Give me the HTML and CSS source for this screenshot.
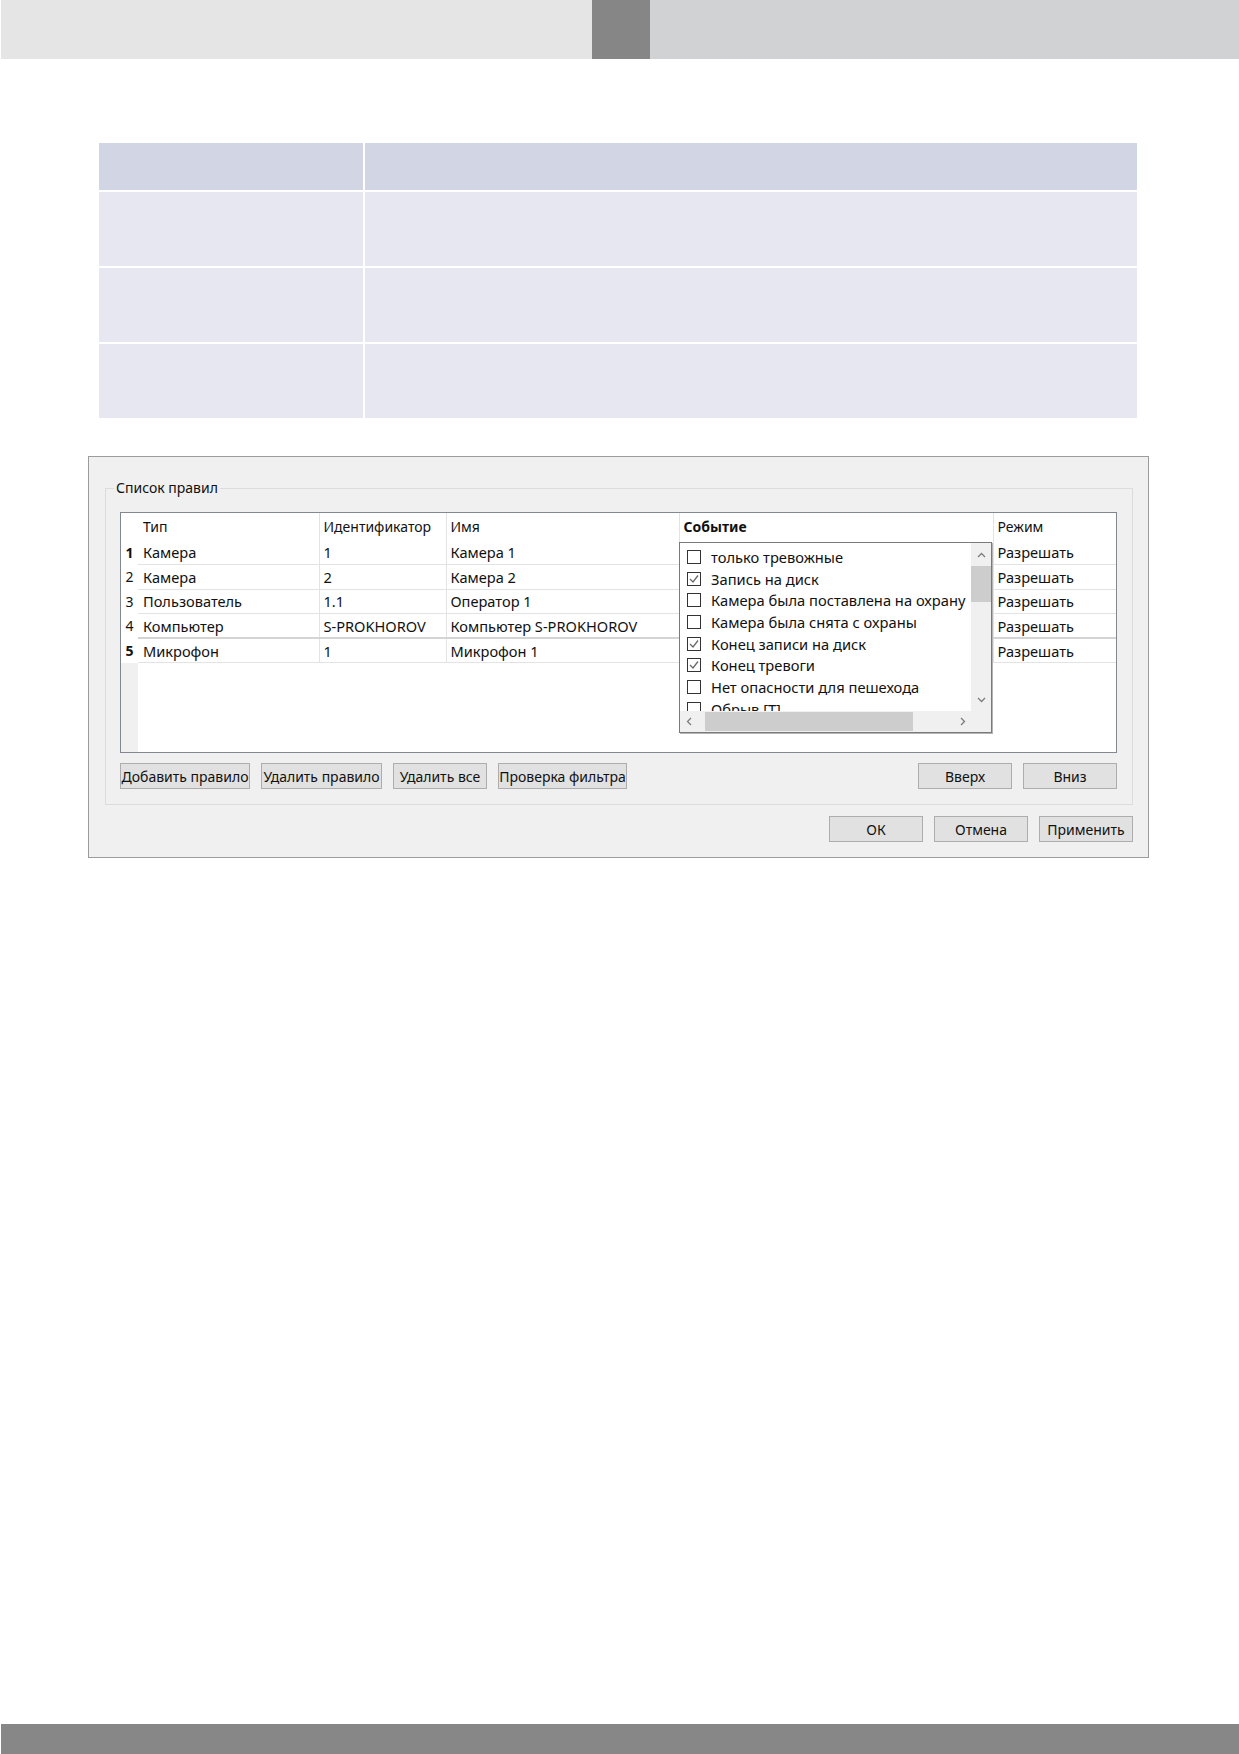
FILE: index.html
```html
<!DOCTYPE html>
<html>
<head>
    <title>Список правил</title>
    <link rel="stylesheet" href="styles.css">
</head>
<body>
    <header class="page-head">
        <div class="head-left"></div>
        <div class="head-mark"></div>
        <div class="head-right"></div>
    </header>

    <div class="doc-table">
        <div class="cell head"></div>
        <div class="cell head"></div>
        <div class="cell"></div>
        <div class="cell"></div>
        <div class="cell"></div>
        <div class="cell"></div>
        <div class="cell"></div>
        <div class="cell"></div>
    </div>

    <div class="dialog">
        <fieldset class="rules">
            <legend>Список правил</legend>
            <div class="grid">
                <table class="rules-table">
                    <colgroup>
                        <col class="c-num">
                        <col class="c-type">
                        <col class="c-id">
                        <col class="c-name">
                        <col class="c-event">
                        <col class="c-mode">
                    </colgroup>
                    <thead>
                        <tr>
                            <th class="num"></th>
                            <th class="first">Тип</th>
                            <th>Идентификатор</th>
                            <th>Имя</th>
                            <th class="bold">Событие</th>
                            <th>Режим</th>
                        </tr>
                    </thead>
                    <tbody>
                        <tr>
                            <td class="num bold">1</td>
                            <td class="first">Камера</td>
                            <td>1</td>
                            <td>Камера 1</td>
                            <td></td>
                            <td>Разрешать</td>
                        </tr>
                        <tr>
                            <td class="num">2</td>
                            <td class="first">Камера</td>
                            <td>2</td>
                            <td>Камера 2</td>
                            <td></td>
                            <td>Разрешать</td>
                        </tr>
                        <tr>
                            <td class="num">3</td>
                            <td class="first">Пользователь</td>
                            <td>1.1</td>
                            <td>Оператор 1</td>
                            <td></td>
                            <td>Разрешать</td>
                        </tr>
                        <tr>
                            <td class="num">4</td>
                            <td class="first">Компьютер</td>
                            <td>S-PROKHOROV</td>
                            <td>Компьютер S-PROKHOROV</td>
                            <td></td>
                            <td>Разрешать</td>
                        </tr>
                        <tr class="current">
                            <td class="num bold">5</td>
                            <td class="first">Микрофон</td>
                            <td>1</td>
                            <td>Микрофон 1</td>
                            <td></td>
                            <td>Разрешать</td>
                        </tr>
                    </tbody>
                </table>

                <!-- dropdown with event checkboxes, opened over the "Событие" column -->
                <div class="event-list">
                    <div class="items">
                        <div class="item"><span class="box"></span>только тревожные</div>
                        <div class="item"><span class="box"><svg viewBox="0 0 12 12"><polyline points="2,6 5,9 10,2.5"/></svg></span>Запись на диск</div>
                        <div class="item"><span class="box"></span>Камера была поставлена на охрану</div>
                        <div class="item"><span class="box"></span>Камера была снята с охраны</div>
                        <div class="item"><span class="box"><svg viewBox="0 0 12 12"><polyline points="2,6 5,9 10,2.5"/></svg></span>Конец записи на диск</div>
                        <div class="item"><span class="box"><svg viewBox="0 0 12 12"><polyline points="2,6 5,9 10,2.5"/></svg></span>Конец тревоги</div>
                        <div class="item"><span class="box"></span>Нет опасности для пешехода</div>
                        <div class="item"><span class="box"></span>Обрыв [Т]</div>
                    </div>
                    <div class="vscroll">
                        <div class="arrow up"><svg width="9" height="6" viewBox="0 0 9 6"><polyline points="1,5 4.5,1.5 8,5"/></svg></div>
                        <div class="vtrack"><div class="vthumb"></div></div>
                        <div class="arrow down"><svg width="9" height="6" viewBox="0 0 9 6"><polyline points="1,1 4.5,4.5 8,1"/></svg></div>
                    </div>
                    <div class="hscroll">
                        <div class="arrow"><svg width="6" height="9" viewBox="0 0 6 9"><polyline points="5,1 1.5,4.5 5,8"/></svg></div>
                        <div class="htrack"><div class="hthumb"></div></div>
                        <div class="arrow"><svg width="6" height="9" viewBox="0 0 6 9"><polyline points="1,1 4.5,4.5 1,8"/></svg></div>
                    </div>
                    <div class="corner"></div>
                </div>
            </div>

            <div class="rules-actions">
                <div class="btn-group">
                    <button class="btn-add">Добавить правило</button>
                    <button class="btn-del">Удалить правило</button>
                    <button class="btn-clear">Удалить все</button>
                    <button class="btn-check">Проверка фильтра</button>
                </div>
                <div class="btn-group">
                    <button class="wide">Вверх</button>
                    <button class="wide">Вниз</button>
                </div>
            </div>
        </fieldset>

        <div class="dialog-actions">
            <button class="wide">ОК</button>
            <button class="wide">Отмена</button>
            <button class="wide">Применить</button>
        </div>
    </div>

    <footer class="page-foot"></footer>
</body>
</html>
```

FILE: styles.css
```css
body {
    margin: 0;
    min-height: 100vh;
    display: flex;
    flex-direction: column;
    background-color: #fff;
    font-family: "Noto Sans", "Open Sans", sans-serif;
}

/* top page band */
.page-head {
    display: flex;
    height: 59px;
    padding-left: 1px;
}
.head-left {
    width: 591px;
    background-color: #e5e5e5;
}
.head-mark {
    width: 58px;
    background-color: #868686;
}
.head-right {
    flex: 1;
    background-color: #d1d2d4;
}

/* empty document table */
.doc-table {
    display: grid;
    grid-template-columns: 264px 1fr;
    grid-template-rows: 47px repeat(3, 74px);
    gap: 2px;
    width: 1038px;
    margin: 84px 0 0 99px;
}
.doc-table .cell {
    background-color: #e6e7f1;
}
.doc-table .cell.head {
    background-color: #d2d5e4;
}

/* dialog window */
.dialog {
    width: 1061px;
    box-sizing: border-box;
    margin: 38px 0 0 88px;
    padding: 22px 15px 15px 16px;
    border: 1px solid #9c9c9c;
    background-color: #f0f0f0;
    font-size: 14px;
    color: #111;
}
.rules {
    margin: 0;
    min-width: 0;
    padding: 15px 15px 15px 14px;
    border: 1px solid #dcdcdc;
}
.rules legend {
    margin-left: -6px;
    padding: 0 2px;
    line-height: 18px;
}

.grid {
    position: relative;
    height: 241px;
    box-sizing: border-box;
    border: 1px solid #828790;
    background: linear-gradient(to right, #f0f0f0 17px, #fff 17px);
    overflow: hidden;
}
.rules-table {
    width: 100%;
    table-layout: fixed;
    border-collapse: collapse;
    background-color: #fff;
}
.c-num { width: 17px; }
.c-type { width: 181px; }
.c-id { width: 127px; }
.c-name { width: 233px; }
.c-event { width: 314px; }
.c-mode { width: 123px; }

.rules-table th,
.rules-table td {
    padding: 0 0 0 4px;
    text-align: left;
    font-weight: normal;
    white-space: nowrap;
    overflow: hidden;
    border-left: 1px solid #e3e3e3;
}
.rules-table th {
    height: 27px;
}
.rules-table td {
    height: 24.6px;
    box-sizing: border-box;
    border-bottom: 1px solid #e3e3e3;
    font-size: 14.6px;
}
.rules-table .num {
    padding: 0;
    text-align: center;
    border-left: none;
    border-bottom-color: #fff;
    font-size: 14px;
}
.rules-table .first {
    border-left: none;
    padding-left: 5px;
}
.rules-table .bold {
    font-weight: bold;
}
.rules-table tr.current td {
    border-top: 2px solid #d4d4d4;
}
.rules-table tr.current td.num {
    border-top-color: #fff;
}

/* event checkbox dropdown */
.event-list {
    position: absolute;
    left: 558px;
    top: 29px;
    width: 313px;
    height: 191px;
    box-sizing: border-box;
    border: 1px solid #7a7a7a;
    box-shadow: 1px 1px 0 #b4b4b4;
    background-color: #fff;
    display: grid;
    grid-template-columns: 1fr 20px;
    grid-template-rows: 1fr 21px;
}
.items {
    overflow: hidden;
    padding-top: 3px;
    font-size: 14.7px;
}
.item {
    display: flex;
    align-items: center;
    height: 21.7px;
    padding-left: 7px;
    white-space: nowrap;
}
.box {
    width: 14px;
    height: 14px;
    box-sizing: border-box;
    border: 1px solid #333;
    margin-right: 10px;
    flex-shrink: 0;
    display: flex;
}
.box svg {
    width: 12px;
    height: 12px;
    fill: none;
    stroke: #6a6a6a;
    stroke-width: 1.3;
}
.vscroll {
    display: flex;
    flex-direction: column;
    background-color: #f0f0f0;
}
.vscroll .arrow {
    height: 23px;
    flex-shrink: 0;
}
.vtrack {
    flex: 1;
}
.vthumb {
    height: 36px;
    background-color: #cdcdcd;
}
.hscroll {
    display: flex;
    background-color: #f0f0f0;
}
.hscroll .arrow {
    width: 17px;
    flex-shrink: 0;
}
.htrack {
    flex: 1;
    display: flex;
    align-items: stretch;
    padding: 1px 0;
}
.hthumb {
    width: 208px;
    margin-left: 8px;
    background-color: #cdcdcd;
}
.corner {
    background-color: #f0f0f0;
}
.arrow {
    display: flex;
    align-items: center;
    justify-content: center;
}
.arrow svg {
    fill: none;
    stroke: #7c7c7c;
    stroke-width: 1.3;
}

/* buttons */
button {
    height: 26px;
    padding: 0;
    border: 1px solid #adadad;
    background-color: #e1e1e1;
    font-family: inherit;
    font-size: 14px;
    color: #111;
    white-space: nowrap;
}
button.wide {
    width: 94px;
}
.btn-add { width: 130px; }
.btn-del { width: 121px; }
.btn-clear { width: 94px; }
.btn-check { width: 129px; }

.rules-actions {
    display: flex;
    justify-content: space-between;
    margin-top: 10px;
}
.btn-group {
    display: flex;
    gap: 11px;
}
.dialog-actions {
    display: flex;
    justify-content: flex-end;
    gap: 11px;
    margin-top: 11px;
}

/* bottom page band */
.page-foot {
    margin-top: auto;
    margin-left: 1px;
    height: 30px;
    background-color: #878787;
}
```
